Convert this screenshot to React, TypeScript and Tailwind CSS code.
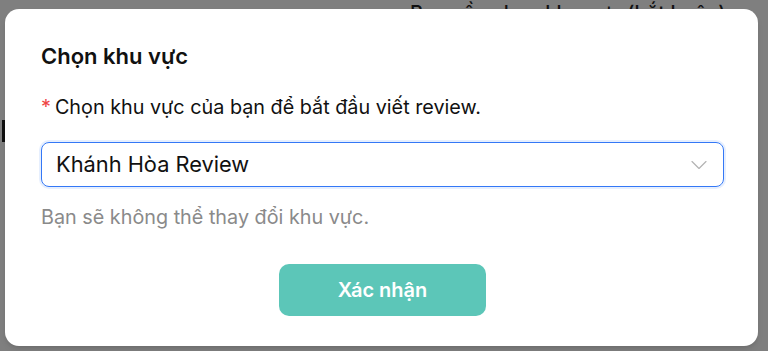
import { ChevronDown } from 'lucide-react';

export default function App() {
  return (
    <div className="relative h-[351px] w-[768px] overflow-hidden bg-[#7f7f7f] font-['Inter',sans-serif]">
      {/* page behind the overlay */}
      <div className="absolute left-[410px] top-[1px] text-[20px] font-medium leading-[24px] text-[#111]">Bạn cần chọn khu vực (bắt buộc)</div>
      <div className="absolute left-[2px] top-[120px] h-[22px] w-[3px] bg-[#111]" />

      {/* modal */}
      <div className="absolute left-[5px] top-[9px] flex h-[337px] w-[753px] flex-col rounded-[14px] bg-white pl-[36px] pr-[34px] pt-[32px] shadow-md">
        <h2 className="text-[22px] font-semibold leading-[30px] text-[#111]">Chọn khu vực</h2>
        <p className="mt-[22px] text-[19.8px] leading-[28px] text-[#111]">
          <span className="mr-[4px] text-[#ef4444]">*</span>
          Chọn khu vực của bạn để bắt đầu viết review.
        </p>
        <div className="mt-[21px] flex h-[45px] items-center justify-between rounded-[8px] border-[1.5px] border-[#3478f6] pl-[14px] pr-[10px] shadow-[0_0_0_2px_rgba(52,120,246,0.12)]">
          <span className="text-[21.8px] text-[#111]">Khánh Hòa Review</span>
          <ChevronDown className="h-[28px] w-[28px] text-[#b3b3b3]" strokeWidth={1} />
        </div>
        <p className="mt-[16px] text-[19.8px] leading-[28px] text-[#8a8a8a]">Bạn sẽ không thể thay đổi khu vực.</p>
        <div className="mt-[33px] flex justify-center">
          <button className="h-[52px] w-[207px] rounded-[10px] bg-[#5cc6b8] text-[20px] font-semibold text-white">
            Xác nhận
          </button>
        </div>
      </div>
    </div>
  );
}
